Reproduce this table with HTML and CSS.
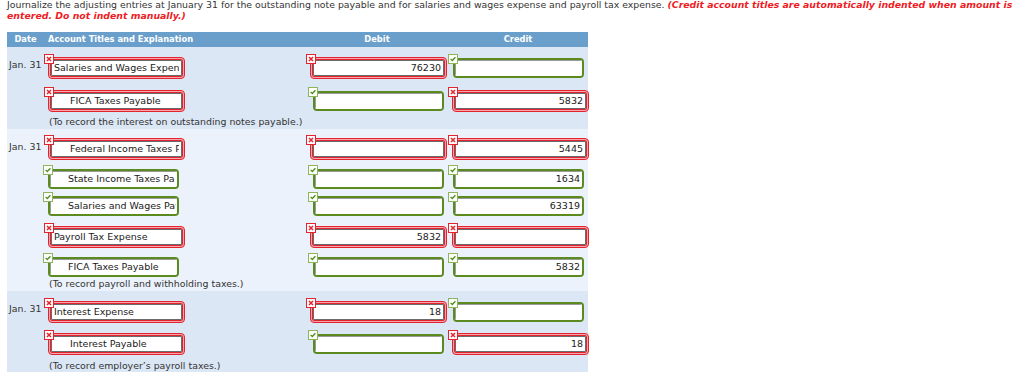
FILE: index.html
```html
<!DOCTYPE html>
<html lang="en">
<head>
<meta charset="utf-8">
<title>Journal entries</title>
<link rel="stylesheet" href="styles.css">
</head>
<body>
<svg class="defs" aria-hidden="true">
  <symbol id="i-bad" viewBox="0 0 10 10">
    <rect x="0.5" y="0.5" width="9" height="9" fill="#fff" stroke="#e3242e"/>
    <path d="M3 3L7 7M7 3L3 7" stroke="#e3242e" stroke-width="1.5" fill="none"/>
  </symbol>
  <symbol id="i-ok" viewBox="0 0 10 10">
    <rect x="0.5" y="0.5" width="9" height="9" fill="#fff" stroke="#8db65a"/>
    <path d="M2.6 4.9L4.3 6.5L7.4 3.3" stroke="#4e8c19" stroke-width="1.3" fill="none"/>
  </symbol>
</svg>
<div class="page">
  <p class="q">Journalize the adjusting entries at January 31 for the outstanding note payable and for salaries and wages expense and payroll tax expense. <em class="note">(Credit account titles are automatically indented when amount is<br>entered. Do not indent manually.)</em></p>

  <table class="jt">
    <thead>
      <tr>
        <th class="c-date">Date</th>
        <th class="c-acct">Account Titles and Explanation</th>
        <th class="c-deb">Debit</th>
        <th class="c-cred">Credit</th>
      </tr>
    </thead>

    <tbody class="grp a wide">
      <tr class="line first">
        <td class="date">Jan. 31</td>
        <td class="acct"><span class="fld bad"><svg class="mk"><use href="#i-bad"/></svg><span class="box"><span class="t">Salaries and Wages Expen</span></span></span></td>
        <td class="amt"><span class="fld bad"><svg class="mk"><use href="#i-bad"/></svg><span class="box"><span class="t">76230</span></span></span></td>
        <td class="amt"><span class="fld ok"><svg class="mk"><use href="#i-ok"/></svg><span class="box"><span class="t"></span></span></span></td>
      </tr>
      <tr class="line">
        <td></td>
        <td class="acct"><span class="fld bad"><svg class="mk"><use href="#i-bad"/></svg><span class="box ind"><span class="t">FICA Taxes Payable</span></span></span></td>
        <td class="amt"><span class="fld ok"><svg class="mk"><use href="#i-ok"/></svg><span class="box"><span class="t"></span></span></span></td>
        <td class="amt"><span class="fld bad"><svg class="mk"><use href="#i-bad"/></svg><span class="box"><span class="t">5832</span></span></span></td>
      </tr>
      <tr class="expl">
        <td></td>
        <td class="txt" colspan="3">(To record the interest on outstanding notes payable.)</td>
      </tr>
    </tbody>

    <tbody class="grp b">
      <tr class="line first r">
        <td class="date">Jan. 31</td>
        <td class="acct"><span class="fld bad"><svg class="mk"><use href="#i-bad"/></svg><span class="box ind"><span class="t">Federal Income Taxes P</span></span></span></td>
        <td class="amt"><span class="fld bad"><svg class="mk"><use href="#i-bad"/></svg><span class="box"><span class="t"></span></span></span></td>
        <td class="amt"><span class="fld bad"><svg class="mk"><use href="#i-bad"/></svg><span class="box"><span class="t">5445</span></span></span></td>
      </tr>
      <tr class="line">
        <td></td>
        <td class="acct"><span class="fld ok"><svg class="mk"><use href="#i-ok"/></svg><span class="box ind"><span class="t">State Income Taxes Pa</span></span></span></td>
        <td class="amt"><span class="fld ok"><svg class="mk"><use href="#i-ok"/></svg><span class="box"><span class="t"></span></span></span></td>
        <td class="amt"><span class="fld ok"><svg class="mk"><use href="#i-ok"/></svg><span class="box"><span class="t">1634</span></span></span></td>
      </tr>
      <tr class="line">
        <td></td>
        <td class="acct"><span class="fld ok"><svg class="mk"><use href="#i-ok"/></svg><span class="box ind"><span class="t">Salaries and Wages Pay</span></span></span></td>
        <td class="amt"><span class="fld ok"><svg class="mk"><use href="#i-ok"/></svg><span class="box"><span class="t"></span></span></span></td>
        <td class="amt"><span class="fld ok"><svg class="mk"><use href="#i-ok"/></svg><span class="box"><span class="t">63319</span></span></span></td>
      </tr>
      <tr class="line r">
        <td></td>
        <td class="acct"><span class="fld bad"><svg class="mk"><use href="#i-bad"/></svg><span class="box"><span class="t">Payroll Tax Expense</span></span></span></td>
        <td class="amt"><span class="fld bad"><svg class="mk"><use href="#i-bad"/></svg><span class="box"><span class="t">5832</span></span></span></td>
        <td class="amt"><span class="fld bad"><svg class="mk"><use href="#i-bad"/></svg><span class="box"><span class="t"></span></span></span></td>
      </tr>
      <tr class="line">
        <td></td>
        <td class="acct"><span class="fld ok"><svg class="mk"><use href="#i-ok"/></svg><span class="box ind"><span class="t">FICA Taxes Payable</span></span></span></td>
        <td class="amt"><span class="fld ok"><svg class="mk"><use href="#i-ok"/></svg><span class="box"><span class="t"></span></span></span></td>
        <td class="amt"><span class="fld ok"><svg class="mk"><use href="#i-ok"/></svg><span class="box"><span class="t">5832</span></span></span></td>
      </tr>
      <tr class="expl">
        <td></td>
        <td class="txt" colspan="3">(To record payroll and withholding taxes.)</td>
      </tr>
    </tbody>

    <tbody class="grp a wide">
      <tr class="line first">
        <td class="date">Jan. 31</td>
        <td class="acct"><span class="fld bad"><svg class="mk"><use href="#i-bad"/></svg><span class="box"><span class="t">Interest Expense</span></span></span></td>
        <td class="amt"><span class="fld bad"><svg class="mk"><use href="#i-bad"/></svg><span class="box"><span class="t">18</span></span></span></td>
        <td class="amt"><span class="fld ok"><svg class="mk"><use href="#i-ok"/></svg><span class="box"><span class="t"></span></span></span></td>
      </tr>
      <tr class="line">
        <td></td>
        <td class="acct"><span class="fld bad"><svg class="mk"><use href="#i-bad"/></svg><span class="box ind"><span class="t">Interest Payable</span></span></span></td>
        <td class="amt"><span class="fld ok"><svg class="mk"><use href="#i-ok"/></svg><span class="box"><span class="t"></span></span></span></td>
        <td class="amt"><span class="fld bad"><svg class="mk"><use href="#i-bad"/></svg><span class="box"><span class="t">18</span></span></span></td>
      </tr>
      <tr class="expl">
        <td></td>
        <td class="txt" colspan="3">(To record employer’s payroll taxes.)</td>
      </tr>
    </tbody>
  </table>
</div>
</body>
</html>
```
FILE: styles.css
```css
* { box-sizing: border-box; }

body {
  margin: 0;
  background: #fff;
  color: #333;
  font-family: "DejaVu Sans", Verdana, sans-serif;
  font-size: 9.4px;
}

.defs {
  position: absolute;
  width: 0;
  height: 0;
  overflow: hidden;
}

.page {
  padding-left: 7px;
}

.q {
  margin: -1px 0 0;
  font-size: 9.35px;
  line-height: 11px;
  white-space: nowrap;
  color: #333;
}

.q .note {
  color: #ee1c25;
  font-weight: bold;
  font-style: italic;
}

.jt {
  margin-top: 11px;
  width: 581px;
  border-collapse: collapse;
  border-spacing: 0;
  table-layout: fixed;
}

.jt th {
  background: #6b9fcb;
  color: #fff;
  font-weight: bold;
  font-size: 8.3px;
  height: 15px;
  line-height: 15px;
  padding: 0;
}

.jt .c-date { width: 37px; text-align: center; }
.jt .c-acct { width: 262px; text-align: left; padding-left: 4px; }
.jt .c-deb { width: 142px; text-align: center; }
.jt .c-cred { width: 140px; text-align: center; }

.grp.a td { background: #dce7f6; }
.grp.b td { background: #ebf2fb; }

.jt td {
  padding: 0;
  vertical-align: top;
}

/* row spacing: green rows, red rows, two-line entries */
.line td {
  padding: 4px 4px 2.5px;
}

.line.r td {
  padding-top: 7px;
  padding-bottom: 4px;
}

.wide .line td {
  padding-top: 5px;
  padding-bottom: 5.5px;
}

.line.first td {
  padding-top: 10px;
}

.line.first.r td {
  padding-top: 9px;
}

.jt .line td.date {
  padding: 12px 0 0 2px;
  line-height: 12px;
  color: #333;
}

.expl td {
  padding: 0 0 1.5px;
  line-height: 10px;
}

.expl td.txt {
  padding-left: 5px;
  color: #333;
}

/* answer fields */
.fld {
  position: relative;
  display: block;
  border-radius: 4px;
}

.fld.bad {
  width: 137px;
  height: 22px;
  border: 1px solid #e3242e;
  padding: 1px;
  background: #f5a6ad;
}

.fld.ok {
  width: 131px;
  height: 20px;
  margin-top: 1px;
  border: 2px solid #5b8b1e;
  background: #fff;
}

.amt .fld {
  margin-left: auto;
}

.box {
  display: block;
  height: 100%;
  background: #fff;
  font-size: 9.5px;
  line-height: 16px;
  color: #1a1a1a;
  border-radius: 2px;
}

.fld.bad .box {
  border: 1px solid #e3242e;
  box-shadow: inset 0 0 0 1px #6b6b6b;
  padding: 0 3px 0 3px;
}

.fld.ok .box {
  box-shadow: inset 1px 1px 0 #9a9a9a;
  padding: 0 1.5px 0 3px;
}

.fld.bad .box.ind { padding-left: 19px; }
.fld.ok .box.ind { padding-left: 18px; }

.t {
  display: block;
  overflow: hidden;
  white-space: nowrap;
}

.amt .box {
  text-align: right;
}

.amt .fld.ok .box {
  padding-right: 2px;
}

.mk {
  position: absolute;
  z-index: 1;
  width: 10px;
  height: 10px;
  display: block;
}

.fld.bad .mk { left: -5px; top: -4px; }
.fld.ok .mk { left: -7px; top: -6px; }
```
